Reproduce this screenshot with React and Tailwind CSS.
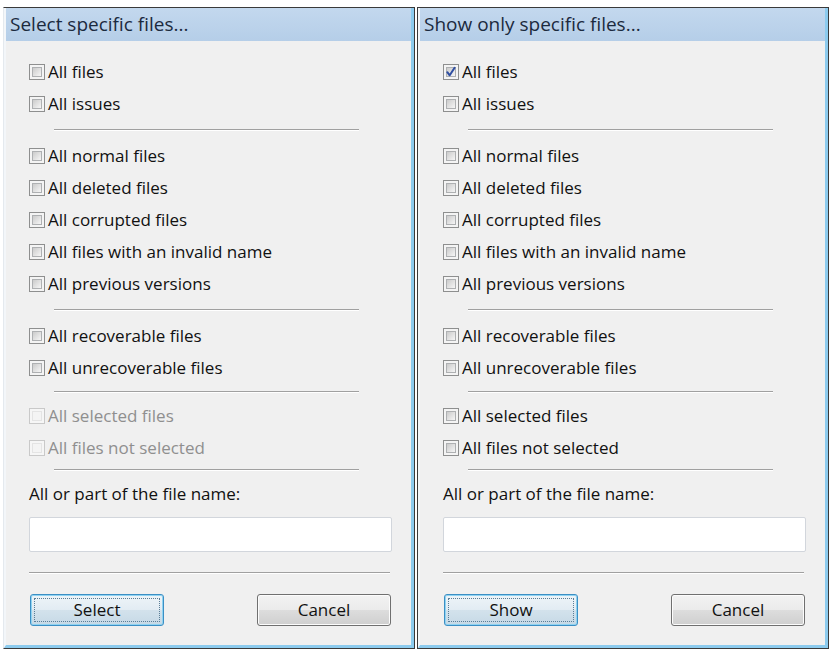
const FONT = { fontFamily: '"Open Sans", "Noto Sans", sans-serif' };

function Box({ checked, disabled }) {
  return (
    <span
      className={`relative h-[16px] w-[16px] shrink-0 border ${
        disabled ? "border-[#c9c9c9] bg-[#f6f6f6]" : "border-[#8e8f8f] bg-[#f4f4f4]"
      }`}
    >
      <span
        className={`absolute inset-[2px] border ${
          disabled
            ? "border-[#e4e4e4] bg-[#f4f4f4]"
            : "border-[#aeb0b2] bg-linear-to-br from-[#cbcbcb] to-[#f6f6f6]"
        }`}
      />
      {checked && (
        <svg viewBox="0 0 16 16" className="absolute -inset-px h-[16px] w-[16px]">
          <path d="M4.3 8.2 L6.7 11.3 L11.6 3.8" fill="none" stroke="#2f4ea2" strokeWidth="2" strokeLinecap="round" strokeLinejoin="round" />
        </svg>
      )}
    </span>
  );
}

function Row({ label, checked, disabled }) {
  return (
    <div className="flex h-[32px] items-center gap-[3px]">
      <Box checked={checked} disabled={disabled} />
      <span className={disabled ? "text-[#8f8f8f]" : "text-[#111]"}>{label}</span>
    </div>
  );
}

function Sep({ h }) {
  return (
    <div className={`flex items-center pl-[25px] ${h}`}>
      <div className="h-[2px] w-[305px] border-t border-b border-t-[#a0a0a0] border-b-white" />
    </div>
  );
}

function Button({ label, focused }) {
  if (focused) {
    return (
      <button className="relative h-[32px] w-[134px] rounded-[3px] border border-[#3c8fc4] bg-[linear-gradient(to_bottom,#eef4f8_0%,#e2ecf3_50%,#d3e2ec_50%,#c6d9e6_100%)] text-[17px] text-[#111] shadow-[inset_0_0_0_1px_#8fd3f2]">
        <span className="absolute inset-[3px] border border-dotted border-[#5a7d96]" />
        <span className="relative">{label}</span>
      </button>
    );
  }
  return (
    <button className="h-[32px] w-[134px] rounded-[3px] border border-[#707070] bg-[linear-gradient(to_bottom,#f2f2f2_0%,#ebebeb_50%,#dddddd_50%,#cfcfcf_100%)] text-[17px] text-[#111] shadow-[inset_0_0_0_1px_#fcfcfc]">
      {label}
    </button>
  );
}

function Panel({ title, action, first, allChecked, selDisabled }) {
  return (
    <div
      className={`flex h-[642px] w-[412px] flex-col border-t border-r border-b border-[#3a3a3a] ${
        first ? "border-l border-l-[#e4e9ee]" : "border-l"
      }`}
    >
      <div className="flex flex-1 flex-col border-l-2 border-r-[3px] border-b-[3px] border-l-[#f3f6f9] border-r-[#8ccbee] border-b-[#8ccbee]">
        <div className="flex h-[33px] items-center bg-linear-to-b from-[#c3d8ee] to-[#b5cee8] pl-[4px] text-[19px] text-[#1b2a3e]">
          {title}
        </div>
        <div className="flex flex-1 flex-col bg-[#f0f0f0] pt-[15px] pl-[23px] pr-[18px] text-[17px]">
          <Row label="All files" checked={allChecked} />
          <Row label="All issues" />
          <Sep h="h-[20px]" />
          <Row label="All normal files" />
          <Row label="All deleted files" />
          <Row label="All corrupted files" />
          <Row label="All files with an invalid name" />
          <Row label="All previous versions" />
          <Sep h="h-[20px]" />
          <Row label="All recoverable files" />
          <Row label="All unrecoverable files" />
          <Sep h="h-[16px]" />
          <Row label="All selected files" disabled={selDisabled} />
          <Row label="All files not selected" disabled={selDisabled} />
          <Sep h="h-[12px]" />
          <div className="flex h-[30px] items-end text-[#111]">All or part of the file name:</div>
          <div className="mt-[11px] h-[35px] w-[363px] shrink-0 rounded-[2px] border border-[#d2d6dc] bg-white" />
          <div className="flex h-[42px] shrink-0 items-center">
            <div className="h-[2px] w-[361px] border-t border-b border-t-[#a0a0a0] border-b-white" />
          </div>
          <div className="flex w-[362px] justify-between pl-px">
            <Button label={action} focused />
            <Button label="Cancel" />
          </div>
        </div>
      </div>
    </div>
  );
}

export default function App() {
  return (
    <div className="h-[651px] w-[834px] bg-white" style={FONT}>
      <div className="flex gap-[2px] pt-[7px] pl-[3px]">
        <Panel title="Select specific files..." action="Select" first selDisabled />
        <Panel title="Show only specific files..." action="Show" allChecked />
      </div>
    </div>
  );
}
